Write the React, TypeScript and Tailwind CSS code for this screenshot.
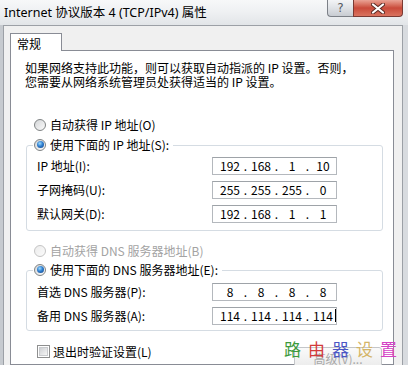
import React from "react";

function Radio({ checked, disabled }: { checked?: boolean; disabled?: boolean }) {
  return (
    <span
      className={
        "w-[12px] h-[12px] rounded-full border flex items-center justify-center shrink-0 " +
        (disabled
          ? "border-[#c4c4c4] bg-gradient-to-br from-[#ececec] to-[#fbfbfb]"
          : "border-[#7f8384] bg-gradient-to-br from-[#d4d6d8] to-[#fbfbfb]")
      }
    >
      {checked && (
        <span className="w-[7px] h-[7px] rounded-full bg-[radial-gradient(circle_at_40%_35%,#9fdcff_0%,#2f7fd0_45%,#123f80_100%)]" />
      )}
    </span>
  );
}

function IpBox({ parts, cursor }: { parts: string[]; cursor?: boolean }) {
  return (
    <div className="w-[125px] h-[18px] border border-[#b4b8bd] border-t-[#9ea3a8] bg-white flex items-center pl-[4px] text-[12px] leading-none text-black">
      {parts.map((p, i) => (
        <React.Fragment key={i}>
          {i > 0 && <span className="w-[5px] text-center">.</span>}
          <span className="w-[26px] text-center relative">
            {p}
            {cursor && i === parts.length - 1 && (
              <span className="absolute right-[0px] top-[-1px] w-[1px] h-[13px] bg-black" />
            )}
          </span>
        </React.Fragment>
      ))}
    </div>
  );
}

function Row({ label, parts, cursor }: { label: string; parts: string[]; cursor?: boolean }) {
  return (
    <div className="flex items-center h-[18px]">
      <span className="w-[175px] text-[12px] leading-none whitespace-nowrap">{label}</span>
      <IpBox parts={parts} cursor={cursor} />
    </div>
  );
}

export default function App() {
  return (
    <div className="relative w-[408px] h-[365px] overflow-hidden bg-[#dcdfe3] flex flex-col font-['Noto_Sans_CJK_SC','Noto_Sans',sans-serif] text-black">
      {/* title bar */}
      <div className="h-[25px] shrink-0 flex bg-gradient-to-b from-[#f7f8f9] via-[#eef0f2] to-[#e2e5e8]">
        <div className="pl-[4px] pt-[4px] text-[12.5px] leading-[17px] whitespace-nowrap font-['Noto_Sans','Noto_Sans_CJK_SC',sans-serif]">
          Internet 协议版本 4 (TCP/IPv4) 属性
        </div>
        <div className="ml-auto mr-[5px] flex h-[17px]">
          <div className="w-[26px] h-[17px] rounded-bl-[4px] border border-t-0 border-r-0 border-[#7c8087] bg-gradient-to-b from-[#f3f4f6] via-[#dfe2e6] to-[#c8ccd2] flex items-center justify-center text-[12px] leading-none text-[#55595f] font-['DejaVu_Sans',sans-serif]">
            ?
          </div>
          <div className="w-[50px] h-[17px] rounded-br-[4px] border border-t-0 border-[#7a3a33] bg-gradient-to-b from-[#e9a395] via-[#c94a3a] to-[#d9735f] flex items-center justify-center">
            <svg width="14" height="11" viewBox="0 0 14 11">
              <path d="M2 1.5 L12 9.5 M12 1.5 L2 9.5" stroke="#5a2a24" strokeWidth="4" strokeLinecap="round" />
              <path d="M2 1.5 L12 9.5 M12 1.5 L2 9.5" stroke="#ffffff" strokeWidth="2.2" strokeLinecap="round" />
            </svg>
          </div>
        </div>
      </div>

      {/* body */}
      <div className="flex flex-1 min-h-0">
        <div className="w-[3px] shrink-0 bg-[#c6cacf]" />
        <div className="w-[400px] shrink-0 border-l border-t border-r border-[#9ca0a6] bg-[#f0f0f0] pl-[6px] pt-[7px] flex flex-col">
          <div className="w-[52px] h-[21px] relative z-10 bg-white border border-b-0 border-[#898c95] text-[12px] leading-none pl-[6px] pt-[4px]">
            常规
          </div>
          <div className="w-[384px] h-[400px] -mt-px border border-[#898c95] bg-white flex flex-col text-[12px]">
            <div className="pl-[14px] pt-[10px] leading-[14px] whitespace-nowrap">
              <div>如果网络支持此功能，则可以获取自动指派的 IP 设置。否则，</div>
              <div>您需要从网络系统管理员处获得适当的 IP 设置。</div>
            </div>

            <div className="mt-[28px] h-[16px] pl-[23px] flex items-center gap-[4px] leading-none">
              <Radio />
              <span>自动获得 IP 地址(O)</span>
            </div>
            <div className="mt-[4px] h-[16px] pl-[22px] flex items-center leading-none">
              <span className="relative z-10 bg-white flex items-center gap-[4px] pl-[1px] pr-[4px]">
                <Radio checked />
                <span>使用下面的 IP 地址(S):</span>
              </span>
            </div>
            <div className="ml-[15px] -mt-[8px] w-[357px] border border-[#d5dce3] rounded-[3px] pl-[10px] pt-[11px] pb-[7px] flex flex-col gap-[6px]">
              <Row label="IP 地址(I):" parts={["192", "168", "1", "10"]} />
              <Row label="子网掩码(U):" parts={["255", "255", "255", "0"]} />
              <Row label="默认网关(D):" parts={["192", "168", "1", "1"]} />
            </div>

            <div className="mt-[12px] h-[16px] pl-[23px] flex items-center gap-[4px] leading-none text-[#a3a3a3]">
              <Radio disabled />
              <span>自动获得 DNS 服务器地址(B)</span>
            </div>
            <div className="mt-[3px] h-[16px] pl-[22px] flex items-center leading-none">
              <span className="relative z-10 bg-white flex items-center gap-[4px] pl-[1px] pr-[4px]">
                <Radio checked />
                <span>使用下面的 DNS 服务器地址(E):</span>
              </span>
            </div>
            <div className="ml-[15px] -mt-[8px] w-[357px] border border-[#d5dce3] rounded-[3px] pl-[10px] pt-[12px] pb-[5px] flex flex-col gap-[6px]">
              <Row label="首选 DNS 服务器(P):" parts={["8", "8", "8", "8"]} />
              <Row label="备用 DNS 服务器(A):" parts={["114", "114", "114", "114"]} cursor />
            </div>

            <div className="mt-[13px] h-[16px] pl-[26px] pr-[11px] flex items-start leading-none">
              <div className="flex items-center gap-[3px] h-[16px]">
                <span className="w-[13px] h-[13px] border border-[#8e8f8f] bg-white flex items-center justify-center shrink-0">
                  <span className="w-[9px] h-[9px] border border-[#c9cbce] bg-gradient-to-br from-[#cfd1d4] to-[#f6f6f6]" />
                </span>
                <span>退出时验证设置(L)</span>
              </div>
              <div className="ml-auto mt-[3px] w-[88px] h-[23px] border border-[#c4c6c9] rounded-[3px] bg-gradient-to-b from-[#fafafa] to-[#eaeaea] flex justify-center pt-[5px] text-[#a8a8a8]">
                高级(V)...
              </div>
            </div>
          </div>
        </div>
        <div className="flex-1 bg-[#d8dbdf]" />
      </div>

      {/* watermark */}
      <div className="absolute left-[284px] top-[340px] flex gap-[7px] text-[17px] leading-none">
        <span className="text-[#3d9a3d]">路</span>
        <span className="text-[#d33a3a]">由</span>
        <span className="text-[#4a55c4]">器</span>
        <span className="text-[#d4b466]">设</span>
        <span className="text-[#d444c4]">置</span>
      </div>
    </div>
  );
}
